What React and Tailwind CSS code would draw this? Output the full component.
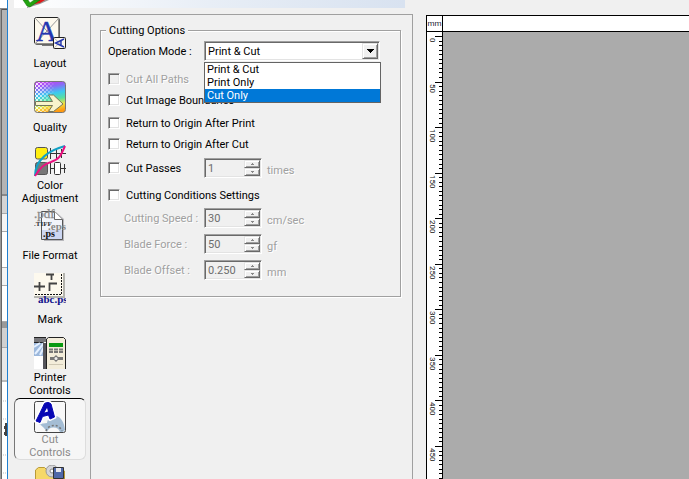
/*
  App.jsx
  Cut controls page of the print dialog: icon sidebar, cutting options form
  and the ruled preview area on the right.
*/
import React, { useState } from 'react'

const MODES = ['Print & Cut', 'Print Only', 'Cut Only']

const sunken =
  'border border-t-[#a0a0a0] border-l-[#a0a0a0] border-b-white border-r-white shadow-[inset_1px_1px_0_#696969,inset_-1px_-1px_0_#e3e3e3]'
const raised =
  'border border-t-[#e3e3e3] border-l-[#e3e3e3] border-b-[#696969] border-r-[#696969] bg-[#f0f0f0] shadow-[inset_1px_1px_0_#fff,inset_-1px_-1px_0_#a0a0a0]'
const dimmed = 'text-[#a0a0a0] [text-shadow:1px_1px_0_#fff]'

/* ---------- sidebar icons ---------- */

function LayoutIcon() {
  return (
    <svg viewBox="0 0 32 32" className="size-8" aria-hidden="true">
      <rect x="1" y="1" width="25" height="27" rx="2" fill="#a8a8a8" />
      <rect x="0.5" y="0.5" width="24.5" height="26.5" rx="2" fill="#fdf9ee" stroke="#222" />
      <path d="M1 1L25 27M25 1L1 27" stroke="#999" strokeWidth="1" />
      <text x="2" y="24" fontSize="29" fontFamily="Liberation Serif, serif" fill="#2336b0" stroke="#2336b0" strokeWidth="0.5">A</text>
      <path d="M8 28.5h12" stroke="#777" />
      <rect x="19.5" y="20.5" width="12" height="11" rx="1" fill="#fdf9ee" stroke="#222" />
      <path d="M20 21l11 10M31 21L20 31" stroke="#bbb" />
      <path d="M30 22L21.500 26L30 30M27 23.500v5" fill="none" stroke="#2336b0" strokeWidth="1.400" />
    </svg>
  )
}

function QualityIcon() {
  return (
    <svg viewBox="0 0 32 32" className="size-8" aria-hidden="true">
      <defs>
        <linearGradient id="spectrum" x1="0.3" y1="0" x2="0.5" y2="1">
          <stop offset="0" stopColor="#c43cf5" />
          <stop offset="0.2" stopColor="#8a6cf5" />
          <stop offset="0.42" stopColor="#3cc8f0" />
          <stop offset="0.62" stopColor="#58e0a0" />
          <stop offset="0.8" stopColor="#f0e040" />
          <stop offset="1" stopColor="#ff9a10" />
        </linearGradient>
        <linearGradient id="fade" x1="0" x2="1">
          <stop offset="0" stopColor="#fff" />
          <stop offset="0.65" stopColor="#000" />
        </linearGradient>
        <pattern id="dots" width="4" height="4" patternUnits="userSpaceOnUse">
          <path d="M0 0h2v2H0zM2 2h2v2H2z" fill="#fff" />
        </pattern>
        <mask id="left">
          <rect width="32" height="32" fill="url(#fade)" />
        </mask>
      </defs>
      <rect x="0.5" y="0.5" width="31" height="31" rx="3" fill="url(#spectrum)" />
      <rect x="1" y="1" width="30" height="30" rx="3" fill="url(#dots)" mask="url(#left)" />
      <rect x="0.5" y="0.5" width="31" height="31" rx="3" fill="none" stroke="#777" />
      <path d="M1.500 20.500h17l-4-6.500h5l9.500 9-9.500 7.500h-5l4-6H1.500z" fill="#f8f4cc" stroke="#75785c" />
    </svg>
  )
}

function ColorIcon() {
  return (
    <svg viewBox="0 0 32 32" className="size-8" aria-hidden="true">
      <rect x="1.5" y="2.500" width="12" height="11.500" rx="2" fill="#ffee10" stroke="#555" />
      <rect x="1.5" y="17.500" width="12" height="12" rx="2" fill="#777" stroke="#555" />
      <path d="M16.500 3v11M16.500 8.500H32M22.500 3v11M27.500 4v9M16.500 18v11M16.500 23.500h4M27 23.500h5M30.500 19v9" fill="none" stroke="#333" />
      <rect x="20.500" y="17.500" width="6" height="12" rx="1" fill="#fff" stroke="#333" />
      <path d="M1 31C1 14 16 5 31 1" fill="none" stroke="#12a0c4" strokeWidth="2" />
      <path d="M1 31C7 22 10 19 17 17C26 14 27 10 31 1" fill="none" stroke="#ec1080" strokeWidth="2" />
    </svg>
  )
}

function FileIcon() {
  return (
    <svg viewBox="0 0 32 32" className="size-8" aria-hidden="true">
      <path d="M10 3h12l8 7v22H10z" fill="#b8b8bc" />
      <path d="M7.500 2.500h13l8 8v20h-21z" fill="#f1f4fb" stroke="#555" />
      <path d="M8 21h20v9H8z" fill="#ccd6f2" />
      <path d="M20.500 2.500v8h8" fill="#fff" stroke="#666" />
      <g fontFamily="Liberation Serif, serif">
        <text x="0" y="9" fontSize="13" fill="#888" stroke="#888" strokeWidth="0.300">.pdf</text>
        <text x="0" y="17" fontSize="7" fontWeight="bold" fill="#333">.TIFF</text>
        <text x="14" y="21" fontSize="11" fontWeight="bold" fill="#888">.eps</text>
        <text x="9" y="28" fontSize="10" fontWeight="bold" fill="#111">.ps</text>
      </g>
    </svg>
  )
}

function MarkIcon() {
  return (
    <svg viewBox="0 0 32 32" className="size-8" aria-hidden="true">
      <path d="M0 0h31v25H0z" fill="#b4b4ae" />
      <path d="M0 0h29v23H0z" fill="#fdf9ee" />
      <path d="M27.500 1v21M1 21.500h27" stroke="#111" strokeDasharray="2 1" />
      <path d="M12 1.500h8M17.500 1v6M0 13.500h11M5.500 9v9M15.500 18v-7.500H23" fill="none" stroke="#444" strokeWidth="1.800" />
      <text x="4" y="30" fontSize="11" fontWeight="bold" fontFamily="Liberation Serif, serif" fill="#10108c">abc.ps</text>
    </svg>
  )
}

function PrinterIcon() {
  return (
    <svg viewBox="0 0 32 32" className="size-8" aria-hidden="true">
      <path d="M0 0h12v5H0z" fill="#77777b" />
      <path d="M0 .5h12M0 5.500h10" stroke="#222" />
      <path d="M0 6h10v14H0z" fill="#9cb8dc" />
      <path d="M0 10l6-4M1 17l9-11M6 18l4-8" stroke="#e4f0ff" strokeWidth="2" />
      <path d="M0 19h9v13H0z" fill="#fff" />
      <path d="M9 6h4v26H9z" fill="#55555a" />
      <path d="M13 1h18v31H13z" fill="#f3edda" />
      <path d="M12.500 32V2l2-1.500h15l2 2V32" fill="none" stroke="#222" />
      <path d="M15 6h14v4H15z" fill="#0a9a12" />
      <path d="M15 12.500h14M15 15h14" stroke="#777" strokeWidth="2" strokeDasharray="4 1" />
      <path d="M16 20h4l2-2 2 2h5v3h-5l-2 2-2-2h-4z" fill="#777" />
      <circle cx="22" cy="21.500" r="1.500" fill="#eee" />
      <path d="M15 27.500h14" stroke="#cfc8b4" />
    </svg>
  )
}

function CutIcon() {
  return (
    <svg viewBox="0 0 32 32" className="size-8" aria-hidden="true">
      <rect x="0.5" y="0.5" width="31" height="31" rx="2" fill="#f8f8f8" stroke="#444" />
      <path d="M5 23L13 22C14 16 18 14 22 15C27 16 30 21 31 29L29 31H26A7 7 0 0 0 13 31C11 28 9 25 5 23z" fill="#a4bdd4" />
      <path d="M12 30a8.500 8.500 0 0 1 16 0" fill="none" stroke="#777" strokeWidth="1.500" strokeDasharray="2 2" />
      <path d="M2 20C5 14 8 8 10.500 2.500C13 1 15 1 17 3L20.500 16L16 18L14.500 14L8.500 15.500L6 21.500z" fill="#fff" stroke="#fff" strokeWidth="4" strokeLinejoin="round" />
      <path d="M2 20C5 14 8 8 10.500 2.500C13 1 15 1 17 3L20.500 16L16 18L14.500 14L8.500 15.500L6 21.500z" fill="#0808b4" stroke="#0808b4" strokeLinejoin="round" />
      <path d="M10.500 11.500L13 7L14 10.500z" fill="#fff" />
    </svg>
  )
}

function FolderIcon() {
  return (
    <svg viewBox="0 0 32 32" className="size-8" aria-hidden="true">
      <path d="M1.500 32V5l3-2.500h6L14 6h16.500v26" fill="#f6d868" stroke="#b99a38" />
      <circle cx="18" cy="6" r="6" fill="#d4d4d8" stroke="#999" />
      <circle cx="18" cy="6" r="2" fill="#fff" stroke="#888" />
      <path d="M19.500 2.500h10v11h-10z" fill="#5068a8" stroke="#333" />
      <path d="M22 3h5v4h-5z" fill="#e8e8ee" />
    </svg>
  )
}

const PAGES = [
  { label: 'Layout', Icon: LayoutIcon },
  { label: 'Quality', Icon: QualityIcon },
  { label: 'Color Adjustment', Icon: ColorIcon },
  { label: 'File Format', Icon: FileIcon },
  { label: 'Mark', Icon: MarkIcon },
  { label: 'Printer Controls', Icon: PrinterIcon },
  { label: 'Cut Controls', Icon: CutIcon, active: true },
  { label: '', Icon: FolderIcon },
]

function Sidebar() {
  return (
    <nav className="flex w-[82px] shrink-0 flex-col pt-1 pr-1 pl-[6px]">
      {PAGES.map(({ label, Icon, active }) => (
        <button
          key={label}
          aria-label={label || 'Presets'}
          className={
            active
              ? 'mb-[2px] flex h-[62px] shrink-0 flex-col items-center rounded-md border border-t-black border-r-[#ddd] border-b-[#ddd] border-l-[#777] bg-[#f6f6f6] pt-[2px] text-[#8a8a8a]'
              : 'flex h-16 shrink-0 flex-col items-center pt-[3px]'
          }
        >
          <Icon />
          <span className="flex w-[60px] grow items-center justify-center text-center">{label}</span>
        </button>
      ))}
    </nav>
  )
}

/* ---------- form parts ---------- */

function Check({ id, label, disabled }) {
  return (
    <>
      <input
        id={id}
        type="checkbox"
        disabled={disabled}
        className={`size-3 shrink-0 appearance-none ${sunken} ${disabled ? 'bg-[#f0f0f0]' : 'bg-white checked:bg-[#0078d7]'}`}
      />
      <label htmlFor={id} className={`ml-[6px] whitespace-nowrap ${disabled ? dimmed : ''}`}>
        {label}
      </label>
    </>
  )
}

function Arrow({ up }) {
  return (
    <svg viewBox="0 0 5 3" className="h-[3px] w-[5px]" shapeRendering="crispEdges" aria-hidden="true">
      <path d={up ? 'M2 0h1v1h1v1H1V1h1z' : 'M1 0h3v1H3v1H2V1H1z'} fill="#888" />
    </svg>
  )
}

function Spin({ id, value, unit, label }) {
  return (
    <>
      <div className={`flex h-5 w-[58px] shrink-0 p-px ${sunken}`}>
        <input id={id} aria-label={label} defaultValue={value} disabled className="w-0 grow bg-transparent pl-[2px] text-[#6d6d6d]" />
        <div className="flex w-4 flex-col">
          <button disabled aria-label="Increase" className={`flex h-2 items-center justify-center ${raised}`}>
            <Arrow up />
          </button>
          <button disabled aria-label="Decrease" className={`flex h-2 items-center justify-center ${raised}`}>
            <Arrow />
          </button>
        </div>
      </div>
      <span className={`ml-[5px] pt-1 ${dimmed}`}>{unit}</span>
    </>
  )
}

function SpinRow({ id, label, value, unit }) {
  return (
    <div className="flex h-5 items-center">
      <label htmlFor={id} className={`w-20 whitespace-nowrap ${dimmed}`}>
        {label}
      </label>
      <Spin id={id} value={value} unit={unit} />
    </div>
  )
}

function ModeSelect() {
  const [mode, setMode] = useState(MODES[0])
  return (
    <div className="relative w-44">
      <select
        id="mode"
        value={mode}
        onChange={(e) => setMode(e.target.value)}
        className={`block h-5 w-full appearance-none bg-white pl-[3px] ${sunken}`}
      >
        {MODES.map((m) => (
          <option key={m}>{m}</option>
        ))}
      </select>
      <span className={`pointer-events-none absolute top-[2px] right-[2px] flex h-4 w-4 items-center justify-center ${raised}`}>
        <svg viewBox="0 0 7 4" className="h-1 w-[7px]" shapeRendering="crispEdges" aria-hidden="true">
          <path d="M0 0h7v1H6v1H5v1H4v1H3V3H2V2H1V1H0z" />
        </svg>
      </span>
      <ul role="listbox" className="absolute top-[21px] left-0 z-10 w-[177px] border border-[#646464] bg-white">
        {MODES.map((m) => (
          <li
            key={m}
            role="option"
            aria-selected={m === 'Cut Only'}
            className={m === 'Cut Only' ? 'bg-[#0078d7] pl-[2px] text-white' : 'pl-[2px]'}
          >
            {m}
          </li>
        ))}
      </ul>
    </div>
  )
}

function CuttingOptions() {
  return (
    <fieldset className="border border-[#a0a0a0] px-[7px] pb-4 shadow-[1px_1px_0_#fff,inset_1px_1px_0_#fff]">
      <legend className="-ml-[2px] bg-[#f0f0f0] px-[3px]">Cutting Options</legend>
      <div className="mt-1 flex h-5 items-center">
        <label htmlFor="mode" className="w-24 whitespace-nowrap">
          Operation Mode :
        </label>
        <ModeSelect />
      </div>
      <div className="mt-2 flex h-5 items-center">
        <Check id="all-paths" label="Cut All Paths" disabled />
      </div>
      <div className="mt-px flex h-5 items-center">
        <Check id="boundaries" label="Cut Image Boundaries" />
      </div>
      <div className="mt-[3px] flex h-5 items-center">
        <Check id="after-print" label="Return to Origin After Print" />
      </div>
      <div className="mt-px flex h-5 items-center">
        <Check id="after-cut" label="Return to Origin After Cut" />
      </div>
      <div className="mt-1 flex h-5 items-center">
        <div className="flex w-24 items-center">
          <Check id="passes" label="Cut Passes" />
        </div>
        <Spin id="passes-count" label="Cut passes count" value="1" unit="times" />
      </div>
      <div className="mt-[7px] flex h-5 items-center">
        <Check id="conditions" label="Cutting Conditions Settings" />
      </div>
      <div className="mt-[3px] flex flex-col gap-[6px] pl-4">
        <SpinRow id="speed" label="Cutting Speed :" value="30" unit="cm/sec" />
        <SpinRow id="force" label="Blade Force :" value="50" unit="gf" />
        <SpinRow id="offset" label="Blade Offset :" value="0.250" unit="mm" />
      </div>
    </fieldset>
  )
}

/* ---------- preview ---------- */

const MM = 0.911

function Ruler() {
  const ticks = Array.from({ length: 200 }, (_, i) => i * 5)
  return (
    <svg className="h-full w-[15px]" shapeRendering="crispEdges" aria-label="Vertical ruler in mm">
      {ticks.map((mm) => {
        const y = Math.round(4 + mm * MM)
        const major = mm % 50 === 0
        return (
          <g key={mm}>
            <rect x={major ? 8 : 12} y={y} width={major ? 7 : 3} height="1" />
            {major && (
              <text transform={`translate(3 ${y + 2}) rotate(90)`} fontSize="8" fill="#111">
                {mm}
              </text>
            )}
          </g>
        )
      })}
    </svg>
  )
}

function Preview() {
  return (
    <section className="mt-[15px] ml-[13px] flex min-w-0 grow flex-col border-t border-l border-black bg-[#ababab]">
      <div className="flex h-4 shrink-0 border-b border-black bg-white">
        <span className="flex w-4 items-center justify-center border-r border-black text-[8px] text-[#223]">mm</span>
      </div>
      <div className="flex min-h-0 grow">
        <div className="w-4 shrink-0 border-r border-black bg-white">
          <Ruler />
        </div>
      </div>
    </section>
  )
}

/* slice of the window that lies behind the dialog */
function Backdrop() {
  return (
    <div className="flex w-[7px] shrink-0 flex-col bg-white">
      <div className="h-2 shrink-0" />
      <div className="flex grow border-t border-[#888]">
        <div className="w-px bg-[#999]" />
        <div className="w-px bg-[#666]" />
        <div className="flex grow flex-col">
          <div className="h-[187px] shrink-0 border-t border-b-2 border-t-[#555] border-b-[#888] bg-[#b4b4b4]" />
          <div className="h-[18px] shrink-0 border-b border-[#aaa] bg-[#d4d4d4]" />
          <div className="h-[18px] shrink-0 border-b border-[#aaa] bg-[#f4f4f4]" />
          <div className="h-9 shrink-0 border-b border-[#aaa]" />
          <div className="h-[18px] shrink-0 border-b border-[#aaa] bg-[#f4f4f4]" />
          <div className="h-9 shrink-0 border-b border-[#aaa]" />
          <div className="h-[26px] shrink-0 border-t-[6px] border-b border-t-[#999] border-b-[#aaa] bg-[#d0d0d0]" />
          <div className="h-[34px] shrink-0 border-b-2 border-[#bbb] bg-[#e8e8e8]" />
          <svg viewBox="0 0 5 96" className="h-24 w-[5px]" aria-hidden="true">
            <path d="M1 19h4M1 37h4M1 73h4M1 91h4" stroke="#bbb" strokeDasharray="1 1" />
            <path d="M2 44h3v3H2zM3 41h2v13H3zM2 50h3v3H2z" fill="#444" />
          </svg>
        </div>
      </div>
    </div>
  )
}

export default function App() {
  return (
    <div className="flex h-screen overflow-hidden bg-[#f0f0f0] font-[Roboto,'Liberation_Sans',sans-serif] text-[11px] leading-[13px] text-black">
      <Backdrop />
      <main className="flex min-w-0 grow border-l border-[#1f7fd0]">
        <div className="flex w-[405px] shrink-0 flex-col">
          <header className="mr-2 ml-[6px] h-2 shrink-0 bg-linear-to-r from-white via-[#e8eef6] to-[#d8e2f0]">
            <svg viewBox="0 0 60 8" className="h-2 w-[60px]" aria-hidden="true">
              <path d="M13 8L26 4l9-4h-8l-14 7z" fill="#999" />
              <path d="M16 4l6-4h9l-5 3-10 2z" fill="#e01818" />
              <path d="M9 0l4 6 3 1L26 0h-6l-4 3-2-3z" fill="#22a410" stroke="#117008" strokeWidth="0.500" />
            </svg>
          </header>
          <div className="mt-[2px] flex min-h-0 grow">
            <Sidebar />
            <div className="mt-1 grow border-t border-r border-l border-[#a0a0a0] px-[9px] pt-[9px] pr-[11px]">
              <CuttingOptions />
            </div>
          </div>
        </div>
        <Preview />
      </main>
    </div>
  )
}
